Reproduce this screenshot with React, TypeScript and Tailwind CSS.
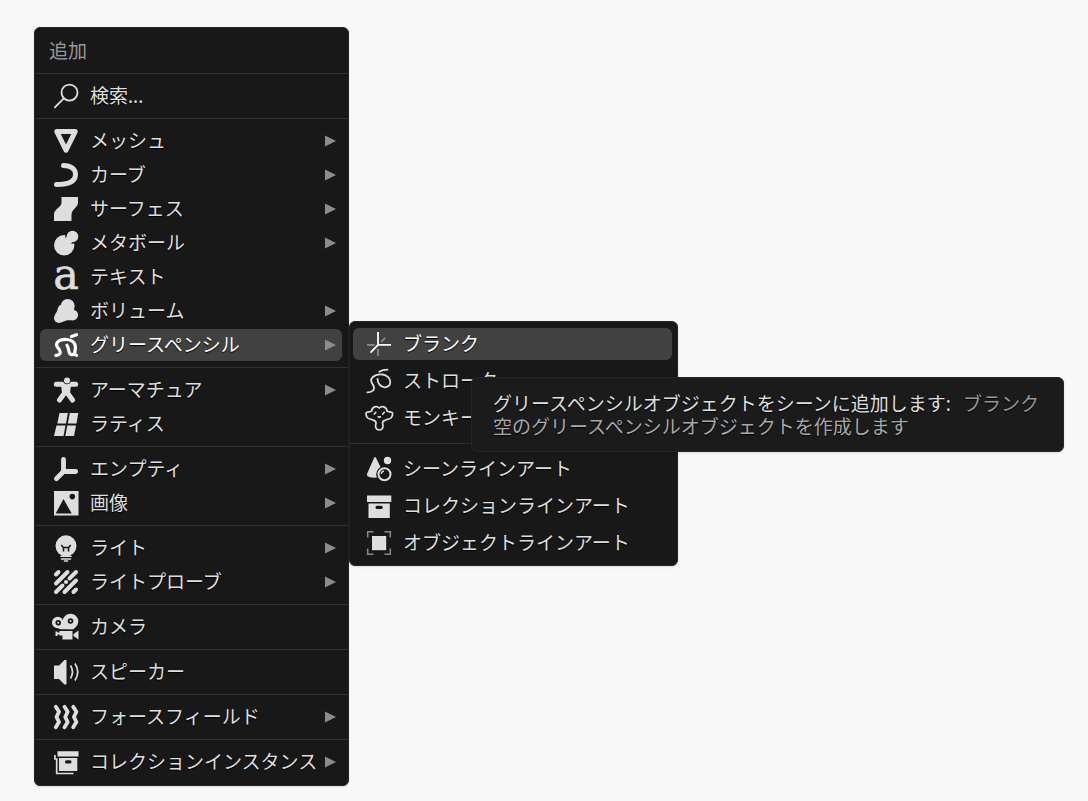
import type { ReactNode } from 'react';

type MenuItem = {
  id: string;
  label: string;
  arrow?: boolean;
};

const groups: MenuItem[][] = [
  [{ id: 'search', label: '検索...' }],
  [
    { id: 'mesh', label: 'メッシュ', arrow: true },
    { id: 'curve', label: 'カーブ', arrow: true },
    { id: 'surface', label: 'サーフェス', arrow: true },
    { id: 'metaball', label: 'メタボール', arrow: true },
    { id: 'text', label: 'テキスト' },
    { id: 'volume', label: 'ボリューム', arrow: true },
    { id: 'gpencil', label: 'グリースペンシル', arrow: true },
  ],
  [
    { id: 'armature', label: 'アーマチュア', arrow: true },
    { id: 'lattice', label: 'ラティス' },
  ],
  [
    { id: 'empty', label: 'エンプティ', arrow: true },
    { id: 'image', label: '画像', arrow: true },
  ],
  [
    { id: 'light', label: 'ライト', arrow: true },
    { id: 'probe', label: 'ライトプローブ', arrow: true },
  ],
  [{ id: 'camera', label: 'カメラ' }],
  [{ id: 'speaker', label: 'スピーカー' }],
  [{ id: 'force', label: 'フォースフィールド', arrow: true }],
  [{ id: 'instance', label: 'コレクションインスタンス', arrow: true }],
];

const subGroups: MenuItem[][] = [
  [
    { id: 'blank', label: 'ブランク' },
    { id: 'stroke', label: 'ストローク' },
    { id: 'monkey', label: 'モンキー' },
  ],
  [
    { id: 'scene', label: 'シーンラインアート' },
    { id: 'collection', label: 'コレクションラインアート' },
    { id: 'object', label: 'オブジェクトラインアート' },
  ],
];

// 24x24 drawings, light shapes use currentColor and cut-outs use the panel colour
const icons: Record<string, ReactNode> = {
  search: (
    <g fill="none" stroke="currentColor" strokeWidth="1.8" strokeLinecap="round">
      <circle cx="15.5" cy="8.6" r="8" />
      <path d="M9.8 14.4L.9 23.4" />
    </g>
  ),
  mesh: (
    <path d="M2.8 2.6H21.2L12 21.2Z" fill="none" stroke="currentColor" strokeWidth="5" strokeLinejoin="round" />
  ),
  curve: (
    <path
      d="M9.5 2.5C17 2.5 21.5 6 21.5 11.5C21.5 18 15 21.5 2.5 21.5"
      fill="none"
      stroke="currentColor"
      strokeWidth="5"
      strokeLinecap="round"
    />
  ),
  surface: <path d="M7.5 0H24V5.5C24 10.5 17.5 12 17.5 18V24H0V17.5C0 12 7.5 10.5 7.5 5.5Z" fill="currentColor" />,
  metaball: (
    <>
      <circle cx="10.2" cy="14.2" r="10.2" fill="currentColor" />
      <circle cx="18.5" cy="5.5" r="7.2" fill="#181818" />
      <circle cx="18.5" cy="5.5" r="5.8" fill="currentColor" />
      <path d="M17.5 6.5L11 13" stroke="currentColor" strokeWidth="7.5" />
    </>
  ),
  text: (
    <text
      x="12"
      y="24"
      textAnchor="middle"
      fontSize="43"
      fontFamily="DejaVu Serif, serif"
      fill="currentColor"
      stroke="currentColor"
      strokeWidth=".6"
      className="[text-shadow:none]"
    >
      a
    </text>
  ),
  volume: (
    <g fill="currentColor">
      <circle cx="13.7" cy="7" r="7" />
      <circle cx="9.5" cy="11" r="6" />
      <circle cx="5" cy="19" r="5" />
      <circle cx="18.8" cy="16" r="5.3" />
      <path d="M4 10.5L20 8V21.2H13L7 23.5L.8 16Z" />
    </g>
  ),
  gpencil: (
    <path
      d="M1.8 22.3C5.5 22.5 7 20.5 5.8 17.5C4.8 15 1.5 13.5 2.8 10.3C4.500 7 9 6.300 13 6.500C18.500 6.800 20.500 9.500 21.300 13C21.800 16 20.500 18 21 20.500C21.300 21.800 22 22.300 22.600 22.300M21 19.500C19.500 22.500 16.300 22.300 15.300 19.500C14.500 17 14.500 14.500 13 12.300M17.500 3.500L22.500 1.700"
      fill="none"
      stroke="currentColor"
      strokeWidth="3.2"
      strokeLinecap="round"
    />
  ),
  armature: (
    <>
      <path
        d="M2.3 6.3H21.7M12 7V13L5.5 22M12 13L18.5 22"
        fill="none"
        stroke="currentColor"
        strokeWidth="5"
        strokeLinecap="round"
        strokeLinejoin="round"
      />
      <path d="M7 7H17L16 15H8Z" fill="currentColor" />
      <circle cx="13" cy="2.5" r="3.8" fill="#181818" />
      <circle cx="13" cy="2.5" r="3" fill="currentColor" />
    </>
  ),
  lattice: (
    <g fill="currentColor">
      <path d="M5.5 1H13.9L12 11.5H3.3ZM15.8 1H24.3L22.5 11.5H13.8Z" />
      <path d="M2.5 13.5H11.5L9.5 24H0ZM13.3 13.5H22L20 24H11.3Z" />
    </g>
  ),
  empty: (
    <path
      d="M9.5 2.5V14.5H21.7M9.5 14.5L2.5 21.7"
      fill="none"
      stroke="currentColor"
      strokeWidth="4.8"
      strokeLinecap="round"
    />
  ),
  image: (
    <>
      <path d="M0 0H24.5V24.5H0Z" fill="currentColor" />
      <path d="M1.7 22.5L9.5 8L17.7 22.5Z" fill="#181818" />
      <circle cx="18.3" cy="5.6" r="2.8" fill="#181818" />
    </>
  ),
  light: (
    <>
      <circle cx="12" cy="9.8" r="10.5" fill="currentColor" />
      <path d="M5.5 16H18.5L17 18.3H7Z" fill="currentColor" />
      <path
        d="M7.3 9L9.3 11.5H14.7L16.7 9M9.5 11.5V15.5M14.5 11.5V15.5"
        fill="none"
        stroke="#181818"
        strokeWidth="1.6"
      />
      <path d="M7 20.3H17M7.5 23H16.5M10.5 25H13.5" stroke="currentColor" strokeWidth="1.6" strokeLinecap="round" />
    </>
  ),
  probe: (
    <g stroke="currentColor" strokeWidth="4" strokeLinecap="round">
      <path d="M2 4.5L4.5 2M2 13.5L13.5 2M2 22L8.5 15.5M15.5 8.5L22 2M10.5 22L22 10.5M19.5 22L22 19.5" />
      <circle cx="12" cy="12" r="2.1" fill="currentColor" stroke="none" />
    </g>
  ),
  camera: (
    <>
      <g fill="currentColor">
        <circle cx="3.7" cy="7.5" r="5.7" />
        <circle cx="16.5" cy="6.5" r="7.8" />
        <path d="M3 8H20V14.2H7C4.5 14.2 3 12.5 3 10Z" />
        <path d="M5.5 16H18.5V24.5H8.5V20.5H5.5V19.5H3.5V21H1.5V16.5H3.5V17.5H5.5ZM24.5 15.5V24.5L19.5 21V19Z" />
      </g>
      <g fill="currentColor" stroke="#181818" strokeWidth="1.8">
        <circle cx="4.2" cy="7.8" r="1.9" />
        <circle cx="16.5" cy="6" r="1.9" />
      </g>
    </>
  ),
  speaker: (
    <>
      <path d="M0 5.5H5L10.5 0H12.5V24.5H10.5L5 19H0Z" fill="currentColor" />
      <path
        d="M16.5 5.5Q20.5 12 16.5 18.5M21 3.5Q26.5 12 21 20.5"
        fill="none"
        stroke="currentColor"
        strokeWidth="1.7"
      />
    </>
  ),
  force: (
    <g fill="none" stroke="currentColor" strokeWidth="3.8" strokeLinecap="round" strokeLinejoin="round">
      <path d="M1.8 1.8L5 6.8L2.5 12L5 17L1.8 22.3" />
      <path d="M10.5 1.8L13.7 6.8L11.2 12L13.7 17L10.5 22.3" />
      <path d="M19.2 1.8L22.4 6.8L19.9 12L22.4 17L19.2 22.3" />
    </g>
  ),
  instance: (
    <>
      <path d="M3.5 1.3H24.5V6.5H3.5ZM5 8H23.3V21H5Z" fill="currentColor" />
      <rect x="11" y="10.3" width="6.5" height="3.2" rx="1.5" fill="#181818" />
      <path d="M1 5V9H2.7V23.5H19.5" fill="none" stroke="currentColor" strokeWidth="1.7" />
    </>
  ),
  blank: (
    <g fill="none" strokeWidth="1.8">
      <path d="M0 12.8H7.5M11 17V24M14.2 9.8L18.2 5.8" stroke="#8a8a8a" />
      <path d="M11 0V12.8H24M11 12.8L3.5 20.7" stroke="currentColor" />
    </g>
  ),
  stroke: (
    <path
      d="M.3 23.3C4.5 23.3 8 21.5 6.8 17.5C6 15 3 12.5 4.3 10C6 6.5 11.5 4.8 15.5 5.5C20 6.2 23.3 9.5 23.3 13C23.3 16.5 20.5 18.5 17.5 18.3C13.5 18 10.5 14.5 10.5 9.8M12.3 2.8C14.5 1.3 17.5 .7 20.5 .7"
      fill="none"
      stroke="currentColor"
      strokeWidth="1.8"
      strokeLinecap="round"
    />
  ),
  monkey: (
    <g fill="none" stroke="currentColor" strokeWidth="1.7" strokeLinecap="round" strokeLinejoin="round">
      <path d="M12.3 2C10 -.3 5 .3 4.7 5C3 6.3 .3 5.3 -1 7C-1.3 11.3 1.2 13.3 4.5 13.3C6 15 9.5 13.5 9 17.5C8 20.5 8.7 24 12.3 24C15.9 24 16.6 20.5 15.6 17.5C15.1 13.5 18.6 15 20.1 13.3C23.4 13.3 25.9 11.3 25.6 7C24.3 5.3 21.6 6.3 19.9 5C19.6 .3 14.6 -.3 12.3 2Z" />
      <path d="M7.3 8L8.8 6.3M15.8 8L17.3 6.3M11.2 10.8L12.3 11.3L13.4 10.8" />
    </g>
  ),
  scene: (
    <>
      <path d="M7.2 .5Q8 -.7 8.8 .5L15.5 14V18C13 21 3 22 0 18.5V17Z" fill="currentColor" />
      <circle cx="20.5" cy="3.5" r="3.7" fill="currentColor" />
      <circle cx="17.5" cy="17.3" r="8.3" fill="#181818" />
      <circle cx="17.5" cy="17.3" r="6" fill="none" stroke="currentColor" strokeWidth="2" />
      <path d="M14.3 17Q14.5 14.5 17 14" fill="none" stroke="currentColor" strokeWidth="1.3" />
    </>
  ),
  collection: (
    <>
      <path d="M0 1.5H24.3V8H0ZM1.5 9.6H22.8V24H1.5Z" fill="currentColor" />
      <rect x="8.5" y="11.8" width="7.3" height="3.3" rx="1.5" fill="#181818" />
    </>
  ),
  object: (
    <>
      <path d="M5 5H19.2V19.2H5Z" fill="currentColor" />
      <path
        d="M.7 6.5V.7H6.5M17.5 .7H23.3V6.5M23.3 17.5V23.3H17.5M6.5 23.3H.7V17.5"
        fill="none"
        stroke="#8a8a8a"
        strokeWidth="1.5"
      />
    </>
  ),
};

function Icon({ id }: { id: string }) {
  return (
    <svg viewBox="0 0 24 24" className="size-6 shrink-0 overflow-visible" aria-hidden="true">
      {icons[id]}
    </svg>
  );
}

function Arrow() {
  return (
    <svg viewBox="0 0 11 12" className="ml-auto h-3 w-[11px] shrink-0" aria-hidden="true">
      <path d="M0 .5L11 6L0 11.5Z" fill="#8c8c8c" />
    </svg>
  );
}

function Row({ item, active }: { item: MenuItem; active: boolean }) {
  return (
    <button
      type="button"
      role="menuitem"
      className={`flex h-8 w-full items-center gap-3 rounded-md pl-3.5 pr-1.5 text-left whitespace-nowrap [text-shadow:0_1px_1px_#000] ${
        active ? 'bg-[#414141] text-white' : 'text-[#dedede]'
      }`}
    >
      <Icon id={item.id} />
      <span className="-mr-3">{item.label}</span>
      {item.arrow && <Arrow />}
    </button>
  );
}

function Tooltip() {
  return (
    <div
      role="tooltip"
      className="absolute top-[51px] left-[121px] z-20 rounded-md border border-[#262626] bg-[#1b1b1b] pt-[15px] pr-6 pb-3 pl-[21px] leading-[23px] whitespace-nowrap text-[#a8a8a8] shadow [text-shadow:0_1px_1px_#000]"
    >
      <p>
        <span className="mr-3 text-[#dedede]">グリースペンシルオブジェクトをシーンに追加します:</span>
        <span className="text-[#969696]">ブランク</span>
      </p>
      <p>空のグリースペンシルオブジェクトを作成します</p>
    </div>
  );
}

function SubMenu() {
  return (
    <div
      role="menu"
      className="absolute -top-[7px] left-full z-10 ml-px w-[329px] rounded-md border border-[#242424] bg-[#181818] pt-1 pb-[3px] shadow"
    >
      {subGroups.map((group, i) => (
        <ul key={i} className={i > 0 ? 'mt-1.5 border-t border-[#303030] pt-[7px]' : ''}>
          {group.map((item) => (
            <li key={item.id} className="relative pt-0.5 pr-[5px] pb-[3px] pl-[3px]">
              <Row item={item} active={item.id === 'blank'} />
              {item.id === 'blank' && <Tooltip />}
            </li>
          ))}
        </ul>
      ))}
    </div>
  );
}

export default function App() {
  return (
    <main
      lang="ja"
      className="min-h-screen bg-[#f9f9f9] px-[34px] pt-[27px] pb-[15px] font-['Noto_Sans','Noto_Sans_CJK_JP',sans-serif] text-[19px] leading-6"
    >
      <nav
        role="menu"
        aria-label="追加"
        className="w-[315px] rounded-md border border-[#242424] bg-[#181818] py-1.5 shadow"
      >
        <h1 className="px-3.5 py-[5px] text-[#989898]">追加</h1>
        {groups.map((group, i) => (
          <ul key={i} className="mt-[5px] border-t border-[#303030] pt-[5px]">
            {group.map((item) => (
              <li key={item.id} className="relative py-px pr-1.5 pl-[5px]">
                <Row item={item} active={item.id === 'gpencil'} />
                {item.id === 'gpencil' && <SubMenu />}
              </li>
            ))}
          </ul>
        ))}
      </nav>
    </main>
  );
}
